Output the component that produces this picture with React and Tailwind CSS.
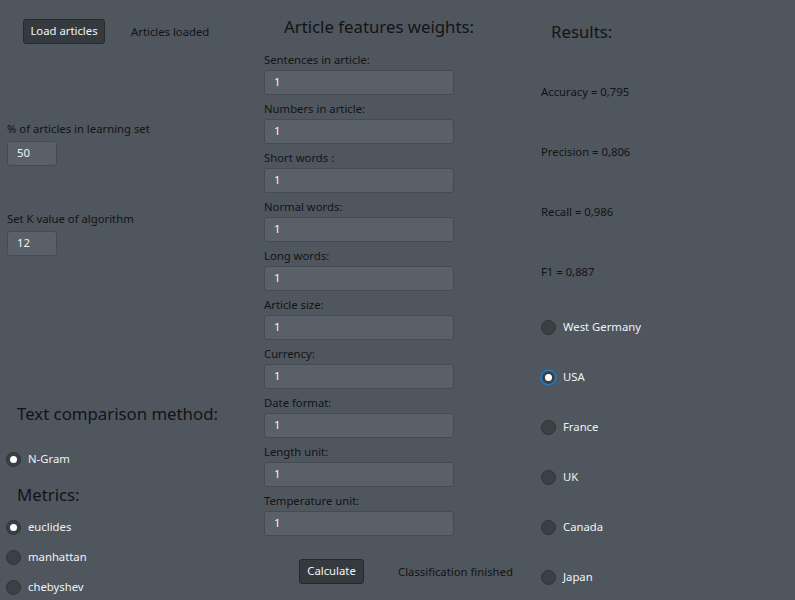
import React from "react";

const font = { fontFamily: '"Noto Sans", "Open Sans", sans-serif' };

function Radio({ label, checked, focused }) {
  return (
    <div className="flex items-center h-4">
      <div
        className={
          "w-[15px] h-[15px] rounded-full flex items-center justify-center border " +
          (focused
            ? "border-[#2a86d0] ring-1 ring-[#1f6fb0] bg-[#3a3f44]"
            : "border-[#2f3338] bg-[#3b4045]")
        }
      >
        {checked && <div className="w-[7px] h-[7px] rounded-full bg-white" />}
      </div>
      <span className="ml-[7px] text-[11.3px] leading-4 text-[#eef2f6]">{label}</span>
    </div>
  );
}

function Field({ value, className }) {
  return (
    <div
      className={
        "h-[25px] rounded-[3px] border border-[#464b51] bg-[#5a6067] flex items-center px-[9px] text-[11.3px] text-[#f2f4f6] " +
        className
      }
    >
      {value}
    </div>
  );
}

function Btn({ children, className }) {
  return (
    <div
      className={
        "h-[25px] rounded-[3px] border border-[#25292d] bg-[#353a3f] flex items-center justify-center text-[11.3px] text-[#f0f4f8] " +
        className
      }
    >
      {children}
    </div>
  );
}

const features = [
  "Sentences in article:",
  "Numbers in article:",
  "Short words :",
  "Normal words:",
  "Long words:",
  "Article size:",
  "Currency:",
  "Date format:",
  "Length unit:",
  "Temperature unit:",
];

export default function App() {
  return (
    <div
      className="w-[795px] h-[600px] bg-[#50565d] flex overflow-hidden text-[#121416]"
      style={font}
    >
      {/* Left column */}
      <div className="w-[264px] flex flex-col">
        <div className="mt-[19px] ml-[23px] flex items-center">
          <Btn className="w-[82px] h-[24px]">Load articles</Btn>
          <span className="ml-[26px] text-[11.3px] leading-4">Articles loaded</span>
        </div>
        <div className="mt-[77px] ml-[7px] text-[11.3px] leading-4">% of articles in learning set</div>
        <Field value="50" className="mt-[4px] ml-[7px] w-[50px] h-[24px]" />
        <div className="mt-[45px] ml-[7px] text-[11.3px] leading-4">Set K value of algorithm</div>
        <Field value="12" className="mt-[4px] ml-[7px] w-[50px] h-[24px]" />
        <div className="mt-[146px] ml-[17px] text-[16.8px] leading-6">Text comparison method:</div>
        <div className="mt-[25px] ml-[6px]">
          <Radio label="N-Gram" checked />
        </div>
        <div className="mt-[16px] ml-[17px] text-[16.8px] leading-6">Metrics:</div>
        <div className="mt-[12px] ml-[6px] flex flex-col gap-[14px]">
          <Radio label="euclides" checked />
          <Radio label="manhattan" />
          <Radio label="chebyshev" />
        </div>
      </div>

      {/* Middle column */}
      <div className="w-[277px] flex flex-col">
        <div className="mt-[15px] ml-[20px] text-[16.8px] leading-6">Article features weights:</div>
        <div className="mt-[13px] flex flex-col gap-[6px]">
          {features.map((f) => (
            <div key={f} className="flex flex-col">
              <div className="text-[11.3px] leading-4">{f}</div>
              <Field value="1" className="mt-[2px] w-[190px]" />
            </div>
          ))}
        </div>
        <div className="mt-[23px] ml-[35px] flex items-center">
          <Btn className="w-[65px]">Calculate</Btn>
          <span className="ml-[34px] text-[11.3px] leading-4">Classification finished</span>
        </div>
      </div>

      {/* Right column */}
      <div className="flex-1 flex flex-col">
        <div className="mt-[20px] ml-[10px] text-[16.8px] leading-6">Results:</div>
        <div className="mt-[40px] text-[11.3px] leading-4">Accuracy = 0,795</div>
        <div className="mt-[44px] text-[11.3px] leading-4">Precision = 0,806</div>
        <div className="mt-[44px] text-[11.3px] leading-4">Recall = 0,986</div>
        <div className="mt-[44px] text-[11.3px] leading-4">F1 = 0,887</div>
        <div className="mt-[39px] flex flex-col gap-[34px]">
          <Radio label="West Germany" />
          <Radio label="USA" checked focused />
          <Radio label="France" />
          <Radio label="UK" />
          <Radio label="Canada" />
          <Radio label="Japan" />
        </div>
      </div>
    </div>
  );
}
